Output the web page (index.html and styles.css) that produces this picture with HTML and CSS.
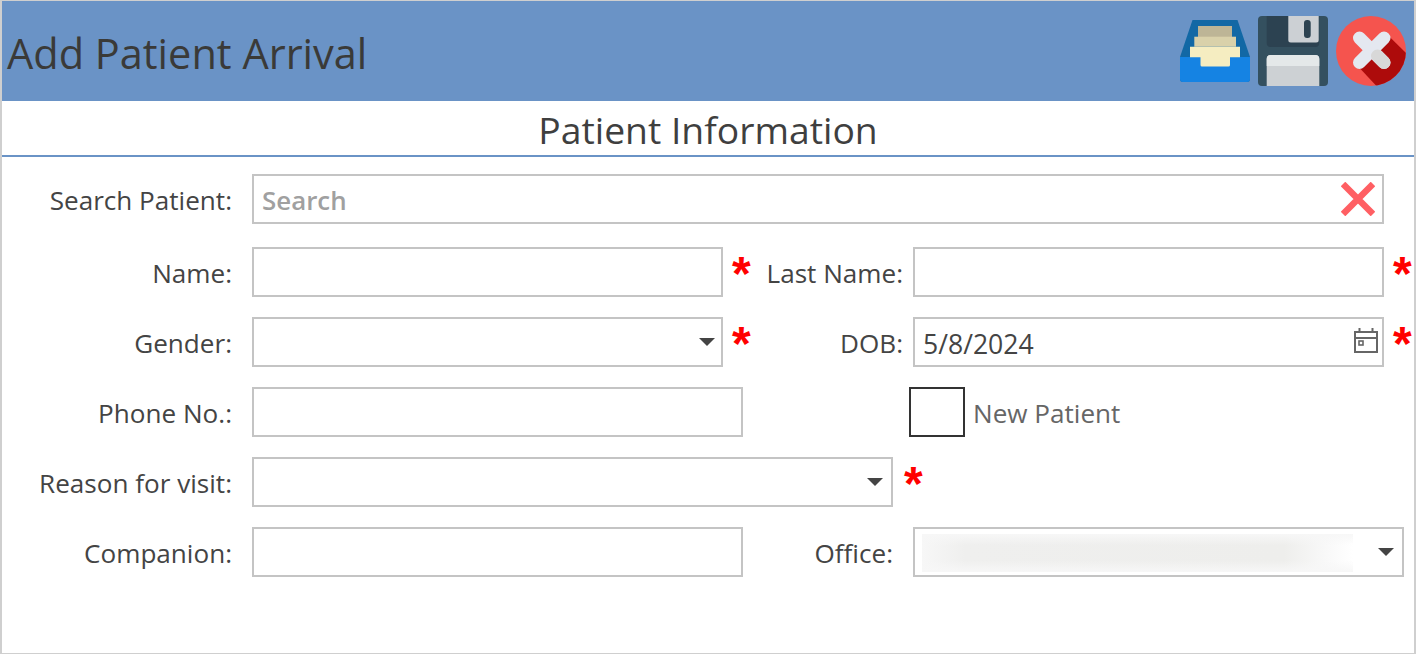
FILE: index.html
```html
<!DOCTYPE html>
<html lang="en">
<head>
<meta charset="utf-8">
<title>Add Patient Arrival</title>
<link rel="stylesheet" href="styles.css">
</head>
<body>
<div class="frame">
  <header class="header">
    <h1 class="title">Add Patient Arrival</h1>
    <div class="actions">
      <svg class="icon" viewBox="0 0 70 70" aria-label="Inbox">
        <path d="M12.5 4H57.5L70 41V63a3 3 0 0 1-3 3H3a3 3 0 0 1-3-3V41Z" fill="#1268a5"/>
        <path d="M0 41H70V63a3 3 0 0 1-3 3H3a3 3 0 0 1-3-3Z" fill="#1583e3"/>
        <rect x="18" y="10" width="34" height="11" fill="#bdb596"/>
        <rect x="14.3" y="20.7" width="41.7" height="10" fill="#d9d1aa"/>
        <path d="M10 30.7H60V41.3H50V49a1.5 1.5 0 0 1-1.5 1.5H22a1.5 1.5 0 0 1-1.5-1.5V41.3H10Z" fill="#f5edc1"/>
      </svg>
      <svg class="icon" viewBox="0 0 70 70" aria-label="Save">
        <rect width="70" height="70" rx="4" fill="#34505f"/>
        <path d="M8.7 0H61.3V27a4 4 0 0 1-4 4H12.7a4 4 0 0 1-4-4Z" fill="#2c4251"/>
        <path d="M30.3 0H60.7V24a2.5 2.5 0 0 1-2.5 2.5H32.8a2.5 2.5 0 0 1-2.5-2.5Z" fill="#ccd0d4"/>
        <rect x="46" y="4" width="6.7" height="18" rx="3" fill="#2c4251"/>
        <path d="M8.7 70V43a4 4 0 0 1 4-4H57.3a4 4 0 0 1 4 4V70Z" fill="#cdd1d4"/>
        <path d="M8.7 50V43a4 4 0 0 1 4-4H57.3a4 4 0 0 1 4 4V50Z" fill="#e4e8e9"/>
      </svg>
      <svg class="icon" viewBox="0 0 70 70" aria-label="Close">
        <defs><clipPath id="disc"><circle cx="35" cy="35" r="35"/></clipPath></defs>
        <circle cx="35" cy="35" r="35" fill="#f5544e"/>
        <path d="M50.7 18L76 43V76H46L18.5 46.5Z" fill="#ad0b0b" clip-path="url(#disc)"/>
        <path d="M23.5 22L48 46.5" stroke="#e4e8f0" stroke-width="13" stroke-linecap="round" fill="none"/>
        <path d="M48 22L23.5 46.5" stroke="#e4e8f0" stroke-width="13" stroke-linecap="round" fill="none"/>
        <path d="M41.5 40L48 46.5" stroke="#d8d8d8" stroke-width="13" stroke-linecap="round" fill="none"/>
      </svg>
    </div>
  </header>

  <h2 class="section-title">Patient Information</h2>

  <form class="form">
    <div class="row row-search">
      <label class="label">Search Patient:</label>
      <div class="control control-search">
        <input class="input input-search" type="text" placeholder="Search">
        <svg class="clear" viewBox="0 0 34 34" aria-label="Clear"><path d="M2 2L32 32M32 2L2 32" stroke="#ff5f63" stroke-width="6.5" fill="none"/></svg>
      </div>
    </div>

    <div class="row">
      <label class="label">Name:</label>
      <div class="cell">
        <input class="input w-short" type="text">
        <span class="req">*</span>
      </div>
      <label class="label label-second">Last Name:</label>
      <div class="cell">
        <input class="input w-short" type="text">
        <span class="req">*</span>
      </div>
    </div>

    <div class="row">
      <label class="label">Gender:</label>
      <div class="cell">
        <div class="select w-short"><span class="caret caret-near"></span></div>
        <span class="req">*</span>
      </div>
      <label class="label label-second">DOB:</label>
      <div class="cell">
        <div class="control w-short">
          <input class="input input-date" type="text" value="5/8/2024">
          <svg class="calendar" viewBox="0 0 24 26" aria-label="Calendar">
            <path d="M1 5H23V25H1ZM1 11H23" stroke="#666" stroke-width="2" fill="none"/>
            <path d="M5.5 1V5M18.5 1V5" stroke="#666" stroke-width="2" fill="none"/>
            <rect x="5" y="14" width="4" height="4" stroke="#666" stroke-width="1.6" fill="none"/>
          </svg>
        </div>
        <span class="req">*</span>
      </div>
    </div>

    <div class="row">
      <label class="label">Phone No.:</label>
      <div class="cell">
        <input class="input w-wide" type="text">
      </div>
      <div class="check-wrap">
        <span class="checkbox"></span>
        <span class="check-label">New Patient</span>
      </div>
    </div>

    <div class="row">
      <label class="label">Reason for visit:</label>
      <div class="cell">
        <div class="select w-reason"><span class="caret"></span></div>
        <span class="req req-reason">*</span>
      </div>
    </div>

    <div class="row">
      <label class="label">Companion:</label>
      <div class="cell">
        <input class="input w-wide" type="text">
      </div>
      <label class="label label-second label-office">Office:</label>
      <div class="cell">
        <div class="select w-wide">
          <span class="blurred"></span>
          <span class="caret"></span>
        </div>
      </div>
    </div>
  </form>
</div>
</body>
</html>
```

FILE: styles.css
```css
* { box-sizing: border-box; }
html, body { margin: 0; padding: 0; background: #fff; }
body { font-family: "Open Sans", "Noto Sans", sans-serif; color: #444; }

.frame {
  width: 1416px;
  height: 654px;
  border: solid #cfcfcf;
  border-width: 1px 2px;
  overflow: hidden;
  background: #fff;
}

.header {
  height: 100px;
  background: #6a93c6;
  display: flex;
  align-items: flex-start;
  justify-content: space-between;
  padding: 15px 8px 0 5px;
}
.title {
  margin: 12px 0 0;
  font-size: 41.5px;
  line-height: 50px;
  font-weight: 400;
  color: #3a3a38;
}
.actions { display: flex; gap: 8px; }
.icon { width: 70px; height: 70px; display: block; }

.section-title {
  margin: 0;
  height: 56px;
  border-bottom: 2px solid #6a93c6;
  text-align: center;
  font-size: 37.3px;
  line-height: 58px;
  font-weight: 400;
  color: #3f3f3f;
}

.form { padding-top: 17px; }
.row { display: flex; align-items: center; height: 50px; margin-bottom: 20px; }
.row-search { margin-bottom: 23px; }

.label {
  flex: none;
  width: 230px;
  margin-right: 20px;
  padding-top: 2px;
  text-align: right;
  font-size: 26.1px;
  color: #444;
}
.label-second { width: 160px; margin-right: 10px; }
.label-office { padding-right: 10px; }

.cell { flex: none; width: 491px; height: 50px; display: flex; align-items: flex-start; }

.input, .select {
  display: block;
  height: 50px;
  border: 2px solid #c4c4c4;
  background: #fff;
  font: inherit;
  font-size: 26.6px;
  color: #444;
  outline: none;
  padding: 4px 8px 0;
  border-radius: 0;
}
.input-search { padding-top: 2px; }
.input::placeholder { color: #a0a0a0; font-weight: 600; font-size: 25.9px; opacity: 1; }
.select { position: relative; }

.w-short { width: 471px; flex: none; }
.w-wide { width: 491px; flex: none; }
.w-reason { width: 641px; flex: none; }

.control { position: relative; height: 50px; }
.control .input { width: 100%; }
.control-search { width: 1132px; }

.clear { position: absolute; right: 9px; top: 8px; width: 34px; height: 34px; }
.calendar { position: absolute; right: 6px; top: 10px; width: 24px; height: 26px; }

.caret {
  position: absolute;
  right: 8px;
  top: 19px;
  width: 0;
  height: 0;
  border-style: solid;
  border-width: 8px 8px 0;
  border-color: #444 transparent transparent;
}
.caret-near { right: 6px; }

.req {
  flex: none;
  margin-left: 9px;
  padding-top: 7px;
  color: #f00;
  font-family: "Liberation Sans", sans-serif;
  font-weight: 700;
  font-size: 48px;
  line-height: 40px;
}
.req-reason { margin-left: 11px; }

.check-wrap { display: flex; align-items: center; margin-left: 166px; }
.checkbox {
  width: 56px;
  height: 50px;
  border: 2px solid #333;
  background: #fff;
}
.check-label { margin-left: 8px; padding-top: 2px; font-size: 26.1px; color: #666; }

.blurred {
  position: absolute;
  left: 7px;
  top: 5px;
  width: 431px;
  height: 38px;
  background:
    linear-gradient(180deg, #f7f7f7 0%, rgba(247,247,247,0) 30%, rgba(247,247,247,0) 70%, #f7f7f7 100%),
    linear-gradient(90deg, #f7f7f7 0%, #efefee 10%, #eeeeec 84%, #f9f9f9 94%, #fff 100%);
}
```
